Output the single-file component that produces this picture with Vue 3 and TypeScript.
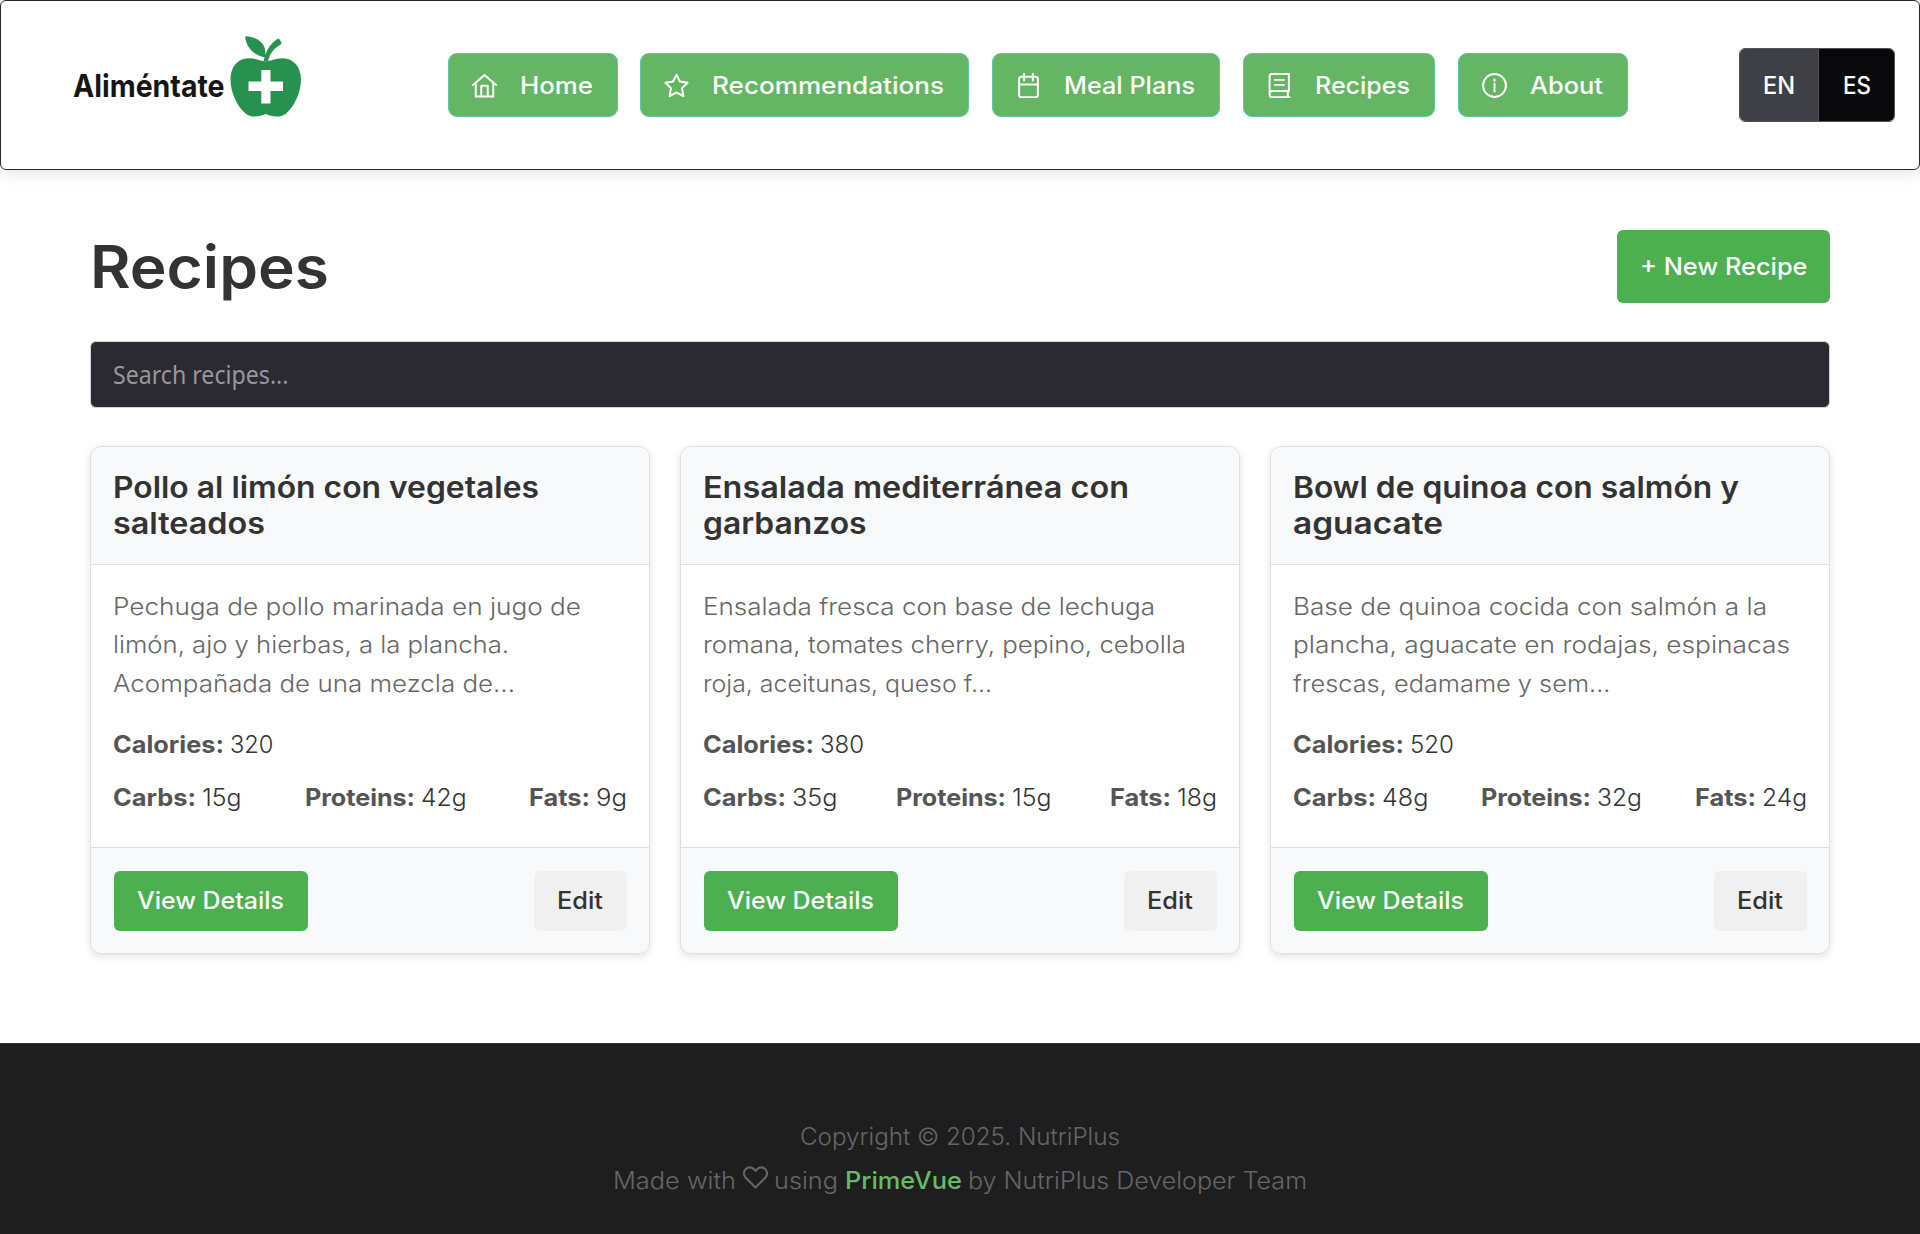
<script setup lang="ts">
import type { Directive } from 'vue'

interface NavItem { label: string; icon: string; width: number }
interface Line { text: string; width: number }
interface Stat { label: string; labelWidth: number; value: string; width: number }
interface Recipe { title: Line[]; description: Line[]; calories: Line; stats: Stat[] }

// Widens or narrows a run of text so that it fills the given measure, in pixels.
const vFit: Directive<HTMLElement, number> = {
  mounted(el, { value }) {
    const natural = el.getBoundingClientRect().width
    if (!natural) return
    el.style.width = `${value}px`
    el.style.transform = `scaleX(${value / natural})`
  },
}

const nav: NavItem[] = [
  { label: 'Home', icon: 'home', width: 73 },
  { label: 'Recommendations', icon: 'star', width: 232 },
  { label: 'Meal Plans', icon: 'calendar', width: 131 },
  { label: 'Recipes', icon: 'book', width: 95 },
  { label: 'About', icon: 'info', width: 73 },
]

const stats = (carbs: Line, proteins: Line, fats: Line): Stat[] => [
  { label: 'Carbs:', labelWidth: 83, value: carbs.text, width: carbs.width },
  { label: 'Proteins:', labelWidth: 110, value: proteins.text, width: proteins.width },
  { label: 'Fats:', labelWidth: 61, value: fats.text, width: fats.width },
]

const recipes: Recipe[] = [
  {
    title: [{ text: 'Pollo al limón con vegetales', width: 426 }, { text: 'salteados', width: 152 }],
    description: [
      { text: 'Pechuga de pollo marinada en jugo de', width: 468 },
      { text: 'limón, ajo y hierbas, a la plancha.', width: 396 },
      { text: 'Acompañada de una mezcla de...', width: 402 },
    ],
    calories: { text: '320', width: 43.5 },
    stats: stats({ text: '15g', width: 39.5 }, { text: '42g', width: 45.5 }, { text: '9g', width: 31 }),
  },
  {
    title: [{ text: 'Ensalada mediterránea con', width: 426 }, { text: 'garbanzos', width: 163.5 }],
    description: [
      { text: 'Ensalada fresca con base de lechuga', width: 452 },
      { text: 'romana, tomates cherry, pepino, cebolla', width: 483 },
      { text: 'roja, aceitunas, queso f...', width: 289 },
    ],
    calories: { text: '380', width: 44 },
    stats: stats({ text: '35g', width: 45.5 }, { text: '15g', width: 39.5 }, { text: '18g', width: 40 }),
  },
  {
    title: [{ text: 'Bowl de quinoa con salmón y', width: 446 }, { text: 'aguacate', width: 150 }],
    description: [
      { text: 'Base de quinoa cocida con salmón a la', width: 474 },
      { text: 'plancha, aguacate en rodajas, espinacas', width: 497 },
      { text: 'frescas, edamame y sem...', width: 317.5 },
    ],
    calories: { text: '520', width: 44 },
    stats: stats({ text: '48g', width: 46.5 }, { text: '32g', width: 45 }, { text: '24g', width: 45 }),
  },
]
</script>

<template>
  <div class="page">
    <header class="topbar">
      <div class="brand">
        <span class="brand-name"><span v-fit="151.5">Aliméntate</span></span>
        <svg class="apple" width="72" height="82" viewBox="0 0 72 82">
          <path fill="#27924f" d="M15.2.2C25.500.6 32 5 34.500 11.500 35.400 14 35.600 17.500 35.200 21.300 24 19.300 15.800 11.500 15.200.2Z" />
          <path fill="#27924f" d="M33.700 25.200C35 17.500 39 8.500 47.300 3.100 48.300 2.500 49 2.700 49.600 3.400L51.300 6.300C51.700 7.100 51.500 7.700 50.900 8.200 43.500 12.500 39.500 18 38.100 25.200Z" />
          <path fill="#27924f" fill-rule="evenodd" d="M35.700 25.300C30.800 25.300 26 22 18.300 22.200 7 22.600.5 31.500.5 43.300.5 57 7.500 71 15.800 77.700 21.500 82 29.500 80.700 35.700 78 41.900 80.700 50 82 55.800 77.700 64 71 71 57 71 43.300 71 31.500 64 22.600 53 22.200 45.500 22 40.600 25.300 35.700 25.300ZM31.300 34H40.500V45.500H53V55H40.500V67.500H31.300V55H18.500V45.500H31.300Z" />
        </svg>
      </div>

      <nav class="nav">
        <a v-for="item in nav" :key="item.label" class="nav-item">
          <svg class="nav-icon" viewBox="0 0 24 24">
            <template v-if="item.icon === 'home'">
              <path d="M.9 11.500 12 2 23.100 11.500" />
              <path d="M3.600 9.500V22.500H20.400V9.500M8.900 22.500V12.200H15.100V22.500" />
            </template>
            <path v-else-if="item.icon === 'star'" d="M12 1.600 15.200 8.200 22.600 9.300 17.300 14.500 18.600 22.200 12 18.700 5.400 22.200 6.700 14.500 1.400 9.300 8.800 8.200Z" />
            <template v-else-if="item.icon === 'calendar'">
              <rect x="3" y="3.700" width="18" height="19.500" rx="2.200" />
              <path d="M3 11H21M7.800.500V7.300M16.200.500V7.300" />
            </template>
            <template v-else-if="item.icon === 'book'">
              <path d="M21 17.300V.900H4.800C3.400.900 2.500 1.900 2.500 3.200V20.800C2.500 22.200 3.500 23.200 4.900 23.200H21.700M21 17.300H5.200C3.500 17.300 2.500 18.500 2.500 20.200M20 17.300V23.200M7.500 6.600H16.200M7.500 11.400H16.200" />
            </template>
            <template v-else>
              <circle cx="12" cy="12" r="11" />
              <path d="M12 10.200V17.700M12 6.200V7.600" />
            </template>
          </svg>
          <span v-fit="item.width">{{ item.label }}</span>
        </a>
      </nav>

      <div class="languages">
        <button class="language selected"><span v-fit="32">EN</span></button>
        <button class="language"><span v-fit="28">ES</span></button>
      </div>
    </header>

    <main class="content">
      <div class="heading">
        <h1><span v-fit="239">Recipes</span></h1>
        <button class="button new"><span v-fit="167.5">+ New Recipe</span></button>
      </div>

      <div class="search"><span v-fit="175.5">Search recipes...</span></div>

      <section class="cards">
        <article v-for="recipe in recipes" :key="recipe.title[0].text" class="card">
          <h2 class="card-title">
            <span v-for="line in recipe.title" :key="line.text" v-fit="line.width">{{ line.text }}</span>
          </h2>
          <div class="card-body">
            <p class="description">
              <span v-for="line in recipe.description" :key="line.text" v-fit="line.width">{{ line.text }}</span>
            </p>
            <div class="stat calories">
              <strong v-fit="111">Calories:</strong>
              <span v-fit="recipe.calories.width">{{ recipe.calories.text }}</span>
            </div>
            <div class="stats">
              <div v-for="stat in recipe.stats" :key="stat.label" class="stat">
                <strong v-fit="stat.labelWidth">{{ stat.label }}</strong>
                <span v-fit="stat.width">{{ stat.value }}</span>
              </div>
            </div>
          </div>
          <footer class="card-actions">
            <button class="button"><span v-fit="147">View Details</span></button>
            <button class="button edit"><span v-fit="46">Edit</span></button>
          </footer>
        </article>
      </section>
    </main>

    <footer class="footer">
      <p><span v-fit="320">Copyright © 2025. NutriPlus</span></p>
      <p>
        <span v-fit="123">Made with</span>
        <svg class="heart" viewBox="0 0 24 24">
          <path d="M12 21.600 2.700 12.200C.4 9.900.3 6.200 2.500 4 4.800 1.700 8.200 1.700 10.500 4L12 5.500 13.500 4C15.800 1.700 19.200 1.700 21.500 4 23.700 6.200 23.600 9.900 21.300 12.200Z" />
        </svg>
        <span v-fit="64">using</span>
        <strong v-fit="117">PrimeVue</strong>
        <span v-fit="339">by NutriPlus Developer Team</span>
      </p>
    </footer>
  </div>
</template>

<style>
body {
  margin: 0;
  background: #fff;
}
</style>

<style scoped>
.page {
  display: flex;
  flex-direction: column;
  height: 1234px;
  overflow: hidden;
  font-family: Inter, "Open Sans", sans-serif;
  font-size: 23.8px;
  color: #333;
}
.page * {
  box-sizing: border-box;
}
.page span,
.page strong {
  display: inline-block;
  flex: none;
  text-align: left;
  white-space: nowrap;
  transform-origin: 0 50%;
}
h1, h2, p {
  margin: 0;
}
button {
  font: inherit;
  margin: 0;
}

.topbar {
  display: flex;
  align-items: center;
  flex: none;
  height: 170px;
  padding: 0 24px 0 72px;
  border: 1px solid #27272a;
  border-radius: 6px;
  background: #fff;
  box-shadow: 0 4px 16px rgba(0, 0, 0, 0.1);
}
.brand {
  display: flex;
  align-items: flex-start;
  width: 374.7px;
  height: 98px;
}
.page .brand-name {
  width: 157px;
  padding-top: 30px;
  font-size: 31.5px;
  font-weight: 700;
  line-height: 40px;
  color: #161616;
}
.apple {
  flex: none;
}
.nav {
  display: flex;
  gap: 22.75px;
}
.nav-item {
  display: flex;
  align-items: center;
  height: 64px;
  padding: 0 24px 0 23px;
  border: 1px solid #5cc8a4;
  border-radius: 9px;
  background: #64b665;
  color: #fff;
  font-weight: 500;
}
.nav-icon {
  width: 25px;
  height: 25px;
  margin-right: 23px;
  fill: none;
  stroke: #fff;
  stroke-width: 1.9;
  stroke-linejoin: round;
  stroke-linecap: round;
}
.languages {
  display: flex;
  width: 156px;
  height: 74px;
  margin-left: auto;
  border: 1px solid #52525b;
  border-radius: 6px;
  overflow: hidden;
}
.language {
  flex: 1;
  padding: 0;
  border: 0;
  background: #09090b;
  color: #fff;
  font-weight: 500;
}
.language.selected {
  flex: none;
  width: 79px;
  border-right: 1px solid #52525b;
  background: #3f3f46;
}

.content {
  flex: none;
  height: 873px;
  padding: 60px 90px 0;
}
.heading {
  display: flex;
  align-items: center;
  justify-content: space-between;
  height: 73px;
}
h1 {
  font-size: 58.5px;
  font-weight: 600;
  line-height: 73px;
}
.button {
  display: flex;
  align-items: center;
  height: 60px;
  padding: 0 24px 0 23px;
  border: 0;
  border-radius: 6px;
  background: #4caf50;
  color: #fff;
  font-weight: 500;
}
.button.new {
  width: 213px;
  height: 73px;
}
.button.edit {
  background: #f0f0f0;
  color: #333;
}
.search {
  display: flex;
  align-items: center;
  height: 67px;
  margin: 38px 0;
  padding: 0 22px;
  border: 1px solid #d4d4d8;
  border-radius: 6px;
  background: #2b2a33;
  color: #98989c;
  font-family: "Noto Sans", "Open Sans", sans-serif;
  font-size: 24.5px;
}
.cards {
  display: flex;
  gap: 30px;
  margin-top: 37px;
}
.card {
  width: 560px;
  height: 508px;
  border: 1px solid #dedfe1;
  border-radius: 11px;
  background: #fff;
  box-shadow: 0 3px 8px rgba(0, 0, 0, 0.11);
  overflow: hidden;
}
.card-title {
  display: flex;
  flex-direction: column;
  align-items: flex-start;
  height: 118px;
  padding: 22px 22px 0;
  border-bottom: 1px solid #dedfe1;
  background: #f8f9fb;
  font-size: 29.8px;
  font-weight: 600;
  line-height: 36px;
}
.card-body {
  height: 282px;
  padding: 22.8px 22px 0;
  line-height: 38.4px;
}
.description {
  display: flex;
  flex-direction: column;
  align-items: flex-start;
  color: #666;
  font-weight: 300;
}
.stat {
  display: flex;
  gap: 6px;
  font-weight: 300;
}
.stat strong {
  color: #555;
  font-weight: 700;
}
.calories {
  margin-top: 22.7px;
}
.stats {
  display: flex;
  justify-content: space-between;
  margin-top: 14.600px;
}
.card-actions {
  display: flex;
  align-items: center;
  justify-content: space-between;
  height: 106px;
  padding: 0 22px 0 23px;
  border-top: 1px solid #dedfe1;
  background: #f8f9fb;
}

.footer {
  flex: 1;
  padding-top: 70px;
  border-top: 1px solid #333;
  background: #1e1e1e;
  color: #666;
  font-weight: 300;
}
.footer p {
  display: flex;
  align-items: center;
  justify-content: center;
  gap: 6.500px;
  height: 44px;
}
.footer strong {
  color: #66bb6a;
  font-weight: 500;
}
.heart {
  width: 25px;
  height: 25px;
  margin-top: -5px;
  fill: none;
  stroke: #666;
  stroke-width: 2;
}
</style>
